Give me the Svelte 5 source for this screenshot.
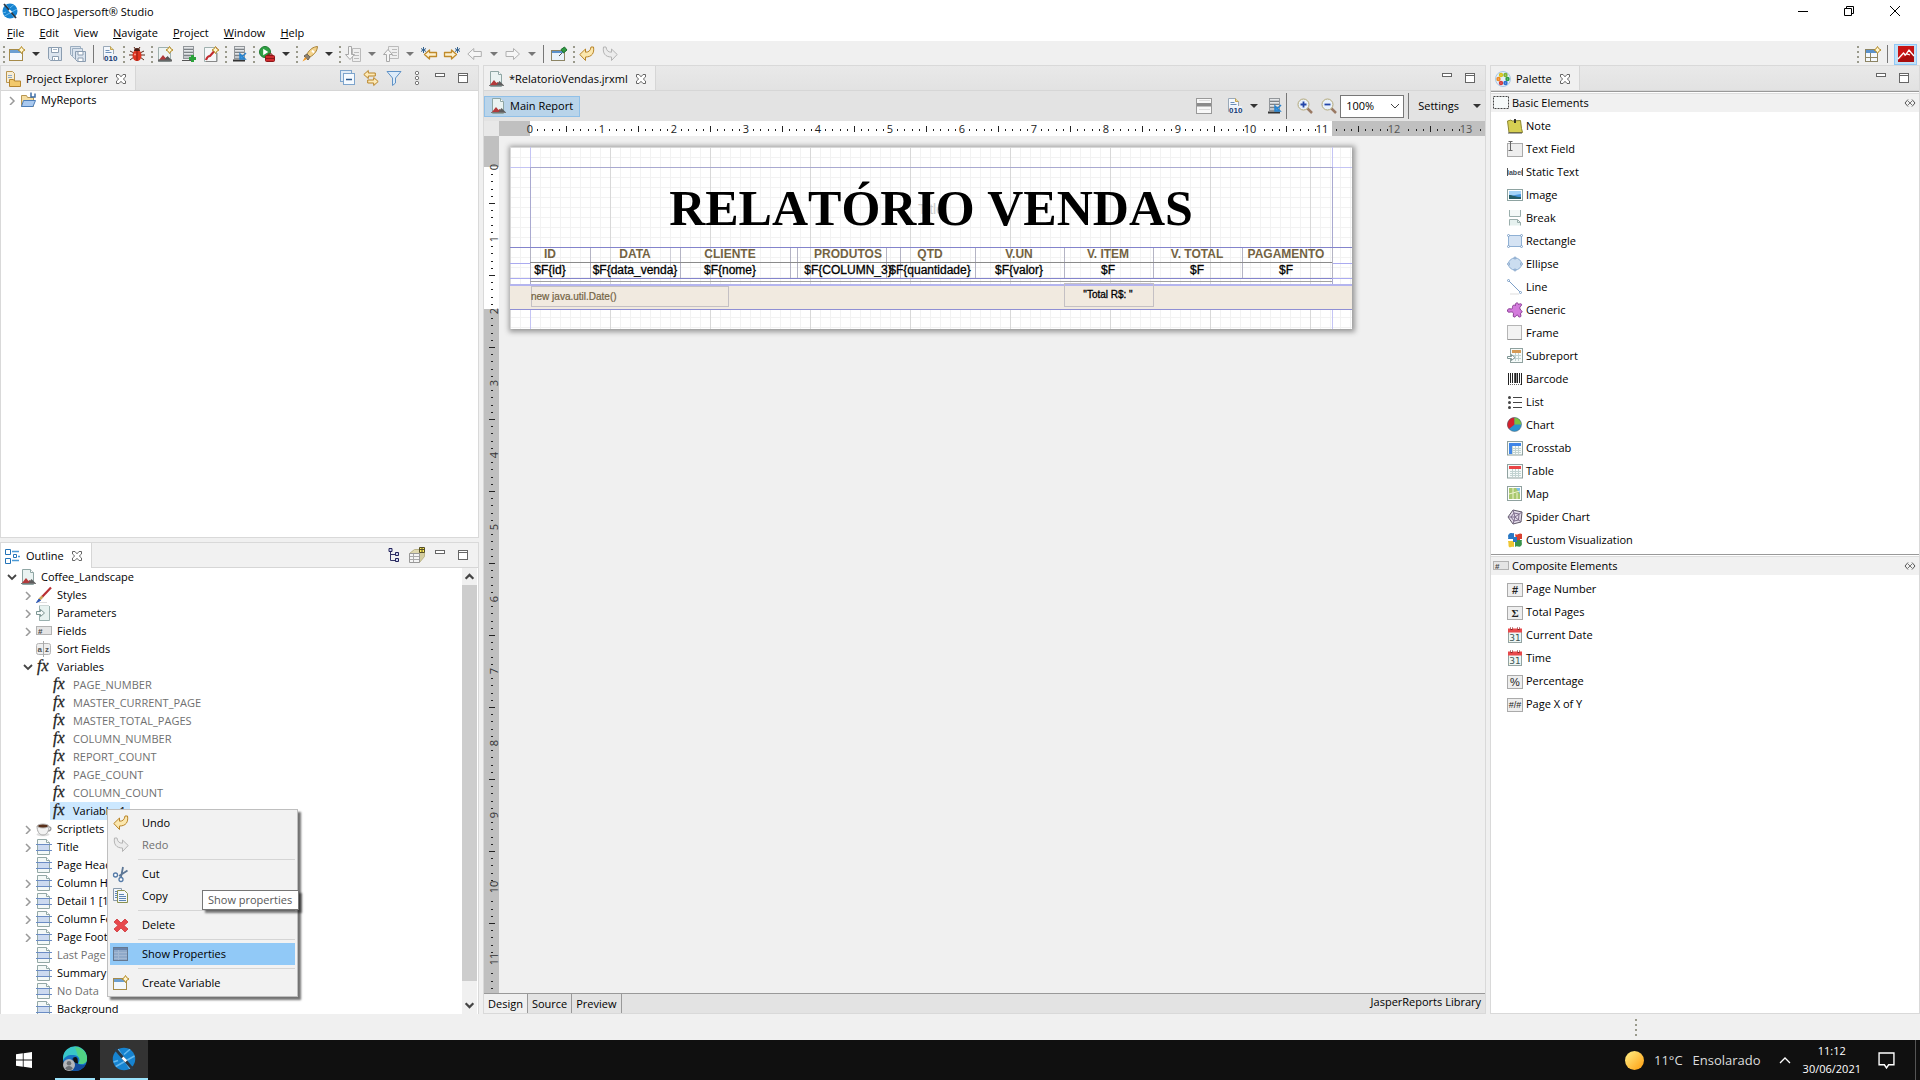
<script>
  const page = '<path d="M2.500 .5h8l3 3v12h-11z" fill="#eaf3f2" stroke="#8fa6a4"/><path d="M10.500 .5v3h3" fill="#fff" stroke="#8fa6a4"/>';
  const spark = '<path d="M12.500 .5l1.300 2.200 2.200 1.300-2.200 1.300-1.300 2.200-1.300-2.200-2.200-1.300 2.200-1.300z" fill="#fff6cf" stroke="#b58a22"/>';
  const mountains = '<path d="M2 14l4-5 2.500 3 1-1 4 3z" fill="#b3393a"/><path d="M8 14.500l3.500-4.500 4.500 4.500z" fill="#5d5d5d"/><path d="M1 14.500h15" stroke="#777"/>';
  const binary = '<path d="M2.500 .5h7l3 3v10h-10z" fill="#f4f8fd" stroke="#9aa9b8"/><path d="M9.500 .5v3h3" fill="#f3d98a" stroke="#c5a550"/><path d="M4.500 4.500h4M4.500 6.500h6" stroke="#6b8fb8"/><rect x="3" y="8" width="13" height="7" fill="#eef3f9"/><text x="3" y="15" font-size="8" font-weight="700" font-family="Liberation Sans, sans-serif" fill="#173a70">010</text>';
  const cell = '<rect x=".5" y="2.500" width="15" height="13" fill="#eee" stroke="#aaa"/>';
  const server = '<rect x="3.500" y=".5" width="10" height="12" fill="#c3c6ca" stroke="#92969a"/><path d="M4 3.500h9M4 6.500h9M4 9.500h9" stroke="#7d8286"/><path d="M4 1.500h9M4 4.500h9M4 7.500h9" stroke="#e4e6e8"/>';
  const gridlines = '<path d="M3 8.500h11M3 10.500h11M3 12.500h11M5.500 6v8M8.500 6v8M11.500 6v8" stroke="#c2d3d1"/>';
  const sheet = '<rect x=".5" y="1.500" width="15" height="13.500" fill="#f6fbfa" stroke="#8fa19f"/>';
  const calendar = '<rect x="1.500" y="4.500" width="13" height="11" fill="#eef6f5" stroke="#93a3a1"/><path d="M1 1.500h14v4H1z" fill="#e8494b"/><path d="M4.500 0v3M11.500 0v3" stroke="#8b2021" stroke-width="2"/><path d="M4.500 0v2M11.500 0v2" stroke="#fff"/><text x="8" y="14" text-anchor="middle" font-size="9" font-family="DejaVu Sans, sans-serif" fill="#3e5654">31</text>';
  const windowNew = '<rect x=".5" y="3.500" width="13" height="11" fill="#f3f8fd" stroke="#a68b4a"/><path d="M1 4h12v3H1z" fill="#6b9fd2"/>' + spark;
  const lens = '<path d="M10 10l5 5" stroke="#9a7a64" stroke-width="2.500"/><circle cx="6.500" cy="6.500" r="5.500" fill="#e9f1fa" stroke="#b3a878"/>';
  const undo = '<path d="M.8 8.500L6.500 3v3.200c3.500 0 5-1.700 5.500-5.200h2.500c1 6-1.500 10-8 10v3.500z" fill="#fbe7ae" stroke="#b98427" stroke-linejoin="round"/>';
  const redo = '<path d="M15.200 8.500L9.500 3v3.200C6 6.200 4.500 4.500 4 1H1.500c-1 6 1.500 10 8 10v3.500z" fill="#ececec" stroke="#b4b4b4" stroke-linejoin="round"/>';
  const downloadSrv = server + '<path d="M2 14.500h12" stroke="#333" stroke-width="2"/><path d="M15 7l-4 4M9 8v5h5z" fill="#3a9be6" stroke="#2a83cc" stroke-width="1.500"/>';
  const fieldBox = '<rect x=".5" y="3.500" width="15" height="8" fill="#e5e5e5" stroke="#b2b2b2"/><text x="2" y="10.500" font-size="8" font-weight="700" font-family="Liberation Sans, sans-serif" fill="#444">#</text>';

  const icons = {
    app: '<circle cx="8" cy="8" r="7.500" fill="#1683d0"/><path d="M4 1.500l8 13M15 6L2.500 13M8 5l4-3.500M4 9L1 10" stroke="#65b9ef" fill="none"/><path d="M2 1l12 14" stroke="#2c3743" stroke-width="1.800"/><path d="M7 7l2.500 2.500" stroke="#fff" stroke-width="1.800"/>',
    newWizard: windowNew,
    save: '<path d="M1.500 1.500h13v13h-11l-2-2z" fill="#dbe4ee" stroke="#8b9db0"/><path d="M4.500 1.500h7v5h-7zM5.500 10.500h6v4h-6z" fill="#fff" stroke="#8b9db0"/><path d="M6 3.500h4M7.500 12v2" stroke="#a8b8c8"/>',
    saveAll: '<path d="M.5 .5h10v10h-8l-2-2z" fill="#dbe4ee" stroke="#9badbf"/><path d="M2.500 2.500h10v10h-8l-2-2z" fill="#dbe4ee" stroke="#9badbf"/><path d="M5.500 5.500h10v10h-8l-2-2z" fill="#dbe4ee" stroke="#8b9db0"/><path d="M8 5.500h5v3.500H8zM8 12h5v3.500H8z" fill="#fff" stroke="#8b9db0"/>',
    binary,
    bug: '<path d="M1 5l4 2M15 5l-4 2M0 9h16M1 14l4-3M15 14l-4-3M5 1l2 3M11 1L9 4" stroke="#5b2a1b"/><ellipse cx="8" cy="9.500" rx="4.500" ry="5.500" fill="#df3420"/><path d="M5 5a3 3 0 0 1 6 0z" fill="#4a1c12"/><path d="M8 5v10" stroke="#8a1d10"/><circle cx="6" cy="8.500" r="1" fill="#f9a08d"/>',
    newReport: '<path d="M1.500 1.500h12v14h-12z" fill="#eef4f3" stroke="#9fb0ae"/><path d="M2 14l4-5 2.500 3 1-1 4 3z" fill="#b3393a"/><path d="M7 14.500l3.500-4.500 4.500 4.500z" fill="#555"/><path d="M1 14.500h14" stroke="#666" stroke-width="2"/>' + spark,
    newData: server + '<path d="M2 14.500h9" stroke="#555"/><path d="M12.500 9v7M9 12.500h7" stroke="#2ca23b" stroke-width="3"/>',
    newStyle: '<path d="M1.500 1.500h12v14h-12z" fill="#f5f7f8" stroke="#9fb0ae"/><path d="M3 14c1-3 2-4 4-4L14 2" fill="none" stroke="#c12b2e" stroke-width="2.200"/><path d="M3 15.500h11V7" fill="none" stroke="#888"/>' + spark,
    publish: downloadSrv,
    run: '<circle cx="6" cy="6" r="5.500" fill="#2ea043" stroke="#1d7b30"/><path d="M4.200 2.800l5 3.200-5 3.200z" fill="#fff"/><rect x="6.500" y="9.500" width="9" height="6" rx="1" fill="#cf2a2d" stroke="#8c1719"/><path d="M9 9.500V8h4v1.500M7 12.500h8" stroke="#8c1719" fill="none"/>',
    rocket: '<path d="M5 8C8 3 11 1 15.500 .5 15 5 13 8 8 11z" fill="#f3d28b" stroke="#a98338"/><path d="M5 8l3 3-2 3-4-4z" fill="#8b8170" stroke="#6e6557"/><path d="M3 11l-2.500 4.500L5 13z" fill="#f49c27"/><path d="M10 4.500l2 2" stroke="#fff" stroke-width="2"/>',
    stepIn: '<path d="M7.500 2.500h8v13h-8z" fill="#efefef" stroke="#bbb"/><path d="M9 6.500h5M9 9.500h5M9 12.500h5" stroke="#bbb"/><path d="M3.500 .5h3v8h3L5 13.500 .5 8.500h3z" fill="#f6f6f6" stroke="#a8a8a8"/>',
    stepOut: '<path d="M5.500 .5h10v12h-10z" fill="#efefef" stroke="#bbb"/><path d="M9 3.500h5M9 6.500h5M9 9.500h5" stroke="#bbb"/><path d="M3.500 15.500h3v-7h3L5 3.500 .5 8.500h3z" fill="#f6f6f6" stroke="#a8a8a8"/>',
    backStar: '<path d="M3.500 8.500l5-4.500v2.500h7v4h-7V13z" fill="#fdf1cf" stroke="#c08a2a" stroke-width="1.300" stroke-linejoin="round"/><path d="M2.500 1v6M0 2.500l5 3M5 2.500l-5 3" stroke="#35638f"/>',
    fwdStar: '<path d="M12.500 8.500l-5-4.500v2.500h-7v4h7V13z" fill="#fdf1cf" stroke="#c08a2a" stroke-width="1.300" stroke-linejoin="round"/><path d="M13.500 1v6M11 2.500l5 3M16 2.500l-5 3" stroke="#35638f"/>',
    back: '<path d="M.8 8l6-5.500v3h7.500v5H6.800v3z" fill="#f6f6f6" stroke="#b0b0b0" stroke-linejoin="round"/>',
    fwd: '<path d="M14.500 8l-6-5.500v3H1v5h7.500v3z" fill="#f6f6f6" stroke="#b0b0b0" stroke-linejoin="round"/>',
    pin: '<rect x=".5" y="4.500" width="13" height="10" fill="#eaf3fb" stroke="#8c8464"/><path d="M1 5h12v2H1z" fill="#5b92cc"/><path d="M8 10l3-3" stroke="#555"/><path d="M10 3.500l3.500-2.500 2.500 3-3.500 3z" fill="#2f9a43" stroke="#1f6e2e"/>',
    undo, redo,
    openPersp: '<rect x=".5" y="3.500" width="12" height="12" fill="#f5f9fc" stroke="#8c8464"/><path d="M1 4h11v3H1z" fill="#5b92cc"/><path d="M5.500 7v8M1 11.500h11" stroke="#8c8464"/>' + spark,
    persp: '<path d="M0 0h16v16H0z" fill="#a80d0d"/><path d="M0 0h16v6L0 14z" fill="#c81414"/><path d="M0 13l5.500-6 2 2L11 4l2 2.500L16 10M6 9l3-1 3 1" fill="none" stroke="#fff" stroke-width="1.300"/>',
    folderDoc: '<path d="M1.500 .5h6l2 2v9h-8z" fill="#f8edd4" stroke="#b99650"/><path d="M3 4.500h4M3 6.500h4" stroke="#8ca9c9"/><path d="M4.500 8.500h4l1 1.500h6v5.500h-11z" fill="#f2c96c" stroke="#b5852e"/>',
    project: '<path d="M1.500 3.500h5l1 2h6v9h-12z" fill="#f5dda0" stroke="#b99650"/><path d="M3.500 8.500h12l-2.500 6H1.500z" fill="#a9c9ef" stroke="#4d7eb8"/><path d="M11 .5v4.500h4V1.500" fill="none" stroke="#3d6ea8" stroke-width="1.500"/>',
    collapseAll: '<rect x=".5" y=".5" width="11" height="11" fill="#dfeaf5" stroke="#7da4cc"/><rect x="3.500" y="3.500" width="11" height="11" fill="#f5faff" stroke="#7da4cc"/><path d="M6 9.500h6" stroke="#2c5b90" stroke-width="1.500"/>',
    link: '<path d="M.8 4.500l4.500-4v2.500h7v3h-7v2.500zM15.200 11.500l-4.500-4V10h-6v3h6v2.500z" fill="#fdeab8" stroke="#b98427" stroke-linejoin="round"/>',
    filter: '<path d="M1 1.500h14l-5.500 6.500v5l-3 2.500V8z" fill="#dcebf9" stroke="#5f92c6" stroke-linejoin="round"/>',
    dots: '<circle cx="8" cy="3" r="1.700" fill="#fff" stroke="#777"/><circle cx="8" cy="8" r="1.700" fill="#fff" stroke="#777"/><circle cx="8" cy="13" r="1.700" fill="#fff" stroke="#777"/>',
    min: '<rect x="3.500" y="3.500" width="9" height="3" fill="#fff" stroke="#666"/>',
    max: '<rect x="3.500" y="3.500" width="9" height="9" fill="#fff" stroke="#666"/><path d="M4 5.500h8" stroke="#666"/>',
    close: '<path d="M3.500 3.500h2.500l2 2.300 2-2.300h2.500V6L10.300 8l2.200 2v2.500H10L8 10.300 6 12.500H3.500V10l2.200-2-2.200-2z" fill="#fff" stroke="#666"/>',
    outline: '<path d="M.5 1.500h5v5h-5zM.5 10.500h5v5h-5z" fill="#fff" stroke="#2474b8"/><path d="M8.500 6.500h3v3h-3z" fill="#fff" stroke="#2474b8"/><path d="M7 3.500h7M13 8.500h2M7 12.500h7" stroke="#4b9ad6" stroke-width="1.500"/>',
    treeView: '<path d="M4.500 2v11.500H11M4.500 7.500H11" fill="none" stroke="#336"/><path d="M3 1.500h3v3H3zM9.500 5.500h3v3h-3zM9.500 11.500h3v3h-3z" fill="#cfd6f0" stroke="#24245c"/>',
    propsView: '<path d="M.5 6.500l5-4h10l-5 4z" fill="#e0d9b0" stroke="#bbb58a"/><path d="M10.500 6.500l5-4v7l-5 6z" fill="#d4cda0" stroke="#bbb58a"/><path d="M.5 6.500h10v9H.5z" fill="#f5f5f5" stroke="#999"/><path d="M1 9.500h9M1 12.500h9M4.500 7v8" stroke="#aaa"/><path d="M10.500 .5h5v5h-5z" fill="#ffec5c" stroke="#554f25"/><path d="M10.500 2.500h5M13 1v4" stroke="#554f25"/>',
    report: page + mountains,
    styles: '<path d="M0 15.500h11" stroke="#ddd"/><path d="M6 10L15 .5" stroke="#b92f33" stroke-width="2.200"/><path d="M3 13l3.500-3.500" stroke="#c9a35c" stroke-width="2.500"/><path d="M.5 15.500L3 12l1.500 1.500z" fill="#2b57b5" stroke="#2b57b5"/>',
    params: '<path d="M3.500 1v14.500h10V1" fill="#e7f2f0" stroke="#9ab0ae"/><path d="M3.500 .5h10M3.500 15.500h10" stroke="#9ab0ae" stroke-dasharray="1 1"/><path d="M.5 6.500h4v-2l4 3.500-4 3.500v-2h-4z" fill="#f4faf9" stroke="#7c9492"/>',
    fields: fieldBox,
    sort: '<rect x=".5" y="2.500" width="14" height="11" rx="2" fill="#eee" stroke="#b5b5b5"/><path d="M7.500 0v16" stroke="#aaa"/><text x="1.500" y="11" font-size="8" font-weight="700" font-family="Liberation Sans, sans-serif" fill="#555">a</text><text x="9" y="11" font-size="8" font-weight="700" font-family="Liberation Sans, sans-serif" fill="#555">z</text>',
    fx: '<text x="1" y="12" font-size="16" font-style="italic" font-family="Liberation Serif, serif" fill="#222" stroke="#222" stroke-width=".3">fx</text>',
    cup: '<ellipse cx="7" cy="13.500" rx="6.500" ry="1.800" fill="#ddd"/><path d="M12 6c4-1 4 4-.5 4" fill="none" stroke="#999" stroke-width="1.200"/><path d="M1 5h12c0 5-2 9-6 9S1 10 1 5z" fill="#f2f2f2" stroke="#aaa"/><ellipse cx="7" cy="5" rx="5.500" ry="2" fill="#59301a" stroke="#bbb"/>',
    band: '<path d="M1.500 .5h9l3 3v12h-12z" fill="#f3f8f7" stroke="#93a8a6"/><path d="M10.500 .5v3h3" fill="#fff" stroke="#93a8a6"/><path d="M2 6h11v5H2z" fill="#ccdaf0"/><path d="M0 5.500h16M0 11.500h16" stroke="#6b8cc4"/>',
    cut: '<path d="M6 10L14.500 4.500M8 11l2-10" stroke="#5d7796" stroke-width="1.800"/><circle cx="2.500" cy="9" r="2" fill="#fff" stroke="#557ba8" stroke-width="1.300"/><circle cx="8" cy="13.500" r="2" fill="#fff" stroke="#557ba8" stroke-width="1.300"/>',
    copy: '<path d="M.5 .5h8v12h-8z" fill="#f3f7fb" stroke="#8a9bad"/><path d="M4.500 2.500h7l3 3v9h-10z" fill="#f3f7fb" stroke="#8a9150"/><path d="M6 6.500h5M6 8.500h7M6 10.500h7M6 12.500h7M2 3.500h2M2 5.500h2M2 7.500h2M2 9.500h2" stroke="#5b84b5"/>',
    del: '<path d="M4 2l4 4 4-4 3 3-4 3.500 4 3.500-3 3-4-4-4 4-3-3 4-3.500L1 5z" fill="#e8484c" stroke="#d4494d" stroke-linejoin="round"/>',
    props: '<rect x=".5" y="1.500" width="14" height="13" fill="#8fa9c9" stroke="#66788f"/><path d="M1 2h13v2H1z" fill="#6883ab"/><path d="M1 6.500h13M1 9.500h13M1 12.500h13M5.500 4v10" stroke="#a3b8d2"/>',
    bands: '<rect x=".5" y=".5" width="15" height="15" fill="#f8f8f8" stroke="#999"/><path d="M1 5h14v3.500H1z" fill="#8b8b8b"/><path d="M3 2.500h11M3 11.500h11" stroke="#ddd"/>',
    zoomIn: lens + '<path d="M3.500 6.500h6M6.500 3.500v6" stroke="#2346a8" stroke-width="1.800"/>',
    zoomOut: lens + '<path d="M3.500 6.500h6" stroke="#2346a8" stroke-width="1.800"/>',
    palette: '<circle cx="8" cy="8" r="7.500" fill="#e3effa" stroke="#a9c8e6"/><g fill="#fff" stroke-width="1.800"><circle cx="6" cy="4" r="1.300" stroke="#d6c31c"/><circle cx="10.500" cy="4" r="1.300" stroke="#7cb332"/><circle cx="3.500" cy="8" r="1.300" stroke="#f08a24"/><circle cx="12.500" cy="8" r="1.300" stroke="#2e9e44"/><circle cx="6" cy="12" r="1.300" stroke="#d23b3b"/><circle cx="10.500" cy="12" r="1.300" stroke="#2d6fd0"/></g>',
    marquee: '<rect x=".5" y="1.500" width="15" height="12" fill="#f6f9f9" stroke="#444" stroke-dasharray="2 1"/>',
    compHead: fieldBox,
    note: '<path d="M.5 3L4 2l1 1 8.500-.5 1 8 1 4L2 14.500z" fill="#d6cf52" stroke="#8d8730"/><path d="M8 1v4" stroke="#222" stroke-width="1.800"/><path d="M1 15l14 0" stroke="#555"/>',
    textField: cell + '<path d="M1.500 .5h4M3.500 1v8M1.500 9.500h4" stroke="#666"/>',
    label: '<path d="M.5 4v8M15.500 4v8" stroke="#555"/><text x="8" y="11" text-anchor="middle" font-size="7" font-weight="700" font-family="Liberation Sans, sans-serif" fill="#444c58">label</text>',
    image: '<rect x=".5" y="2.500" width="15" height="11" fill="#fff" stroke="#8ea3a1"/><path d="M2 4h12v8H2z" fill="#4a97de"/><path d="M2 4h12v3L2 9z" fill="#a5d3f7"/><path d="M2 8c4 0 6 2 12 2v2H2z" fill="#255c66"/>',
    break: '<path d="M2.500 0v6.500h11V0" fill="#f3f8f7" stroke="#9aaeac"/><path d="M2.500 15.500v-6h8l3 3v3" fill="#e6f1ef" stroke="#9aaeac"/><path d="M10.500 9.500v3h3" fill="none" stroke="#9aaeac"/>',
    rect: '<rect x="1.500" y="2.500" width="13" height="11" fill="#d5e3f3" stroke="#8fb0d4"/><g fill="#fff" stroke="#7c9fc8"><circle cx="1.500" cy="2.500" r="1"/><circle cx="14.500" cy="2.500" r="1"/><circle cx="1.500" cy="13.500" r="1"/><circle cx="14.500" cy="13.500" r="1"/></g>',
    ellipse: '<ellipse cx="8" cy="8" rx="6.500" ry="6" fill="#cbddf0" stroke="#8fb0d4"/><g fill="#fff" stroke="#7c9fc8"><circle cx="8" cy="2" r="1"/><circle cx="8" cy="14" r="1"/><circle cx="1.500" cy="8" r="1"/><circle cx="14.500" cy="8" r="1"/></g>',
    line: '<path d="M2 2l11 11" stroke="#7c9fc8"/><path d="M3 15h9" stroke="#ddd"/><g fill="#fff" stroke="#7c9fc8"><circle cx="1.500" cy="1.500" r="1"/><circle cx="13.500" cy="13.500" r="1"/></g>',
    generic: '<path d="M8.500 3.500c-1-3 3-3.500 3-1 1.500-1 3.500-1 3 .5s-2.500 2-1.500 4 2.500 1.500 2 3-2 .5-1.500 2 1 3-1 3-1-2.500-2.500-2-1 2.500-3 2 .5-3-1-4.500-5 1-5.500-1.500S3 6.500 4 7s1.500-1 1.500-2.500 2-1.500 3-1z" fill="#d37bdc" stroke="#8a3c94"/>',
    frame: '<rect x=".5" y=".5" width="14" height="14" fill="#f3f3f3" stroke="#b5b5b5"/><path d="M1 14.500h14" stroke="#999"/>',
    subreport: '<rect x="3.500" y=".5" width="12" height="14" fill="#f6fbfa" stroke="#8fa19f"/><path d="M5 2h9v3H5z" fill="#d59a55"/><path d="M5 7.500h9M5 10.500h9M8.500 5v8M11.500 5v8" stroke="#c2d3d1"/><path d="M.5 8.500h4v-2l3.500 3-3.500 3v-2h-4z" fill="#fff" stroke="#7c9492"/>',
    barcode: '<path d="M1.500 2v12M3.500 2v10M5.500 2v10M8 2v10M10.500 2v10M12.500 2v10M14.500 2v12" stroke="#222"/><path d="M8.500 2v10" stroke="#222" stroke-width="2"/><path d="M3 13.500h11" stroke="#666" stroke-dasharray="1 1"/>',
    list: '<path d="M6 3.500h9M6 8.500h9M6 13.500h9" stroke="#444"/><g fill="#444"><circle cx="2.500" cy="3.500" r="1.500"/><circle cx="2.500" cy="8.500" r="1.500"/><circle cx="2.500" cy="13.500" r="1.500"/></g>',
    chart: '<circle cx="7.500" cy="7.500" r="7" fill="#2c93cf"/><path d="M7.500 7.500V.5a7 7 0 0 0-5.500 11.500z" fill="#d8202c"/><path d="M7.500 7.500V.5a7 7 0 0 1 6.800 7z" fill="#7cc242"/><circle cx="7.500" cy="7.500" r="7" fill="none" stroke="#54606a" stroke-opacity=".5"/>',
    crosstab: sheet + gridlines + '<path d="M2 3h12v3H2zM2 6h3v8H2z" fill="#3f86e8"/>',
    table: sheet + gridlines + '<path d="M2 3h12v3H2z" fill="#ea4446"/>',
    map: '<rect x=".5" y=".5" width="14" height="14" fill="#fff" stroke="#8fa19f"/><path d="M2 2h11v11H2z" fill="#a9c86e"/><path d="M9 2h4v6z" fill="#7cc0ee"/><path d="M2 8l11-3M6 2v11M10 7v6" stroke="#eef3cf"/>',
    spider: '<path d="M6 1l9 2-1 10-8 2L1 8z" fill="#e3dbe9" stroke="#5f5968"/><path d="M7 4l5 1-.5 6-4.500 1-3-4zM6 1l2 7 7-5M8 8l6 5M8 8l-2 7M8 8H1" fill="none" stroke="#7d6d8c"/>',
    custom: '<path d="M2 2c2-2 3 0 5-1v6H1c1-2-1-3 1-5z" fill="#2877c4"/><path d="M8 2c3 2 4-2 7 0v5H9z" fill="#d94130"/><path d="M1 9h6v6c-2-1-4 1-5 0s0-3-1-6z" fill="#eec632"/><path d="M8 8h7c-1 2 1 4-1 6s-4-1-6 1z" fill="#38924a"/><path d="M6 5h4v5H6z" fill="#2877c4"/><path d="M10 5h3v3h-3z" fill="#d94130"/>',
    pageNumber: cell + '<text x="8" y="13" text-anchor="middle" font-size="11" font-weight="700" font-family="Liberation Sans, sans-serif" fill="#222">#</text>',
    total: cell + '<text x="8" y="13" text-anchor="middle" font-size="11" font-weight="700" font-family="Liberation Serif, serif" fill="#222">Σ</text>',
    calendar,
    percent: cell + '<text x="8" y="13" text-anchor="middle" font-size="11" font-family="Liberation Sans, sans-serif" fill="#222">%</text>',
    pageXY: cell + '<text x="8" y="12" text-anchor="middle" font-size="9" font-family="Liberation Sans, sans-serif" fill="#222">#/#</text>',
    collapse: '<path d="M6 4.500L3 8l3 3.500M10 4.500L13 8l-3 3.500" fill="none" stroke="#555"/><path d="M6 6l4 4M10 6l-4 4" stroke="#777"/>',
    windows: '<path d="M0 2.300l6.800-1v6.300H0zM7.600 1.200L16 0v7.600H7.600zM0 8.400h6.800v6.300l-6.800-1zM7.600 8.400H16V16l-8.400-1.200z" fill="#fff"/>',
    edge: '<circle cx="8" cy="8" r="8" fill="#1773c4"/><path d="M0 7a8 8 0 0 1 16 1c0 3-3 4-6 3 2-2 1-5-2-5.500S2 5 0 9z" fill="#38c6c8"/><path d="M8 0a8 8 0 0 1 8 8c0 3-3 4-6 3 2-2 1-4 0-5z" fill="#59d66e" fill-opacity=".75"/><path d="M10 11c2 1.500 4 1.500 5.500 0A8 8 0 0 1 7 15.800C4 14 4 8.500 7 7c-1 2 1 4 3 4z" fill="#124a9c"/><path d="M7 7c1.500-1 3 0 2.800 2L10 11C8 11 6 9 7 7z" fill="#101010"/><circle cx="4" cy="12" r="4" fill="#b4b6ba"/><circle cx="4" cy="10.800" r="1.500" fill="#6b6e73"/><path d="M1.500 14.500c.5-2.500 4.500-2.500 5 0a4 4 0 0 1-5 0z" fill="#6b6e73"/>'
  };

  const menus = ['File', 'Edit', 'View', 'Navigate', 'Project', 'Window', 'Help'];

  const tools = [
    'grip', 'newWizard', 'caret', 'save', 'saveAll', 'sep', 'binary',
    'grip', 'bug', 'grip', 'newReport', 'newData', 'newStyle',
    'grip', 'publish', 'grip', 'run', 'caret', 'grip', 'rocket', 'caret',
    'grip', 'stepIn', 'caretDim', 'stepOut', 'caretDim', 'backStar', 'fwdStar',
    'back', 'caretDim', 'fwd', 'caretDim', 'sep', 'pin', 'grip', 'undo', 'redo'
  ];

  const tree = [
    { l: 0, a: 'open', i: 'report', t: 'Coffee_Landscape' },
    { l: 1, a: 'shut', i: 'styles', t: 'Styles' },
    { l: 1, a: 'shut', i: 'params', t: 'Parameters' },
    { l: 1, a: 'shut', i: 'fields', t: 'Fields' },
    { l: 1, i: 'sort', t: 'Sort Fields' },
    { l: 1, a: 'open', i: 'fx', t: 'Variables' },
    { l: 2, i: 'fx', t: 'PAGE_NUMBER', dim: true },
    { l: 2, i: 'fx', t: 'MASTER_CURRENT_PAGE', dim: true },
    { l: 2, i: 'fx', t: 'MASTER_TOTAL_PAGES', dim: true },
    { l: 2, i: 'fx', t: 'COLUMN_NUMBER', dim: true },
    { l: 2, i: 'fx', t: 'REPORT_COUNT', dim: true },
    { l: 2, i: 'fx', t: 'PAGE_COUNT', dim: true },
    { l: 2, i: 'fx', t: 'COLUMN_COUNT', dim: true },
    { l: 2, i: 'fx', t: 'Variable_1', sel: true },
    { l: 1, a: 'shut', i: 'cup', t: 'Scriptlets' },
    { l: 1, a: 'shut', i: 'band', t: 'Title' },
    { l: 1, i: 'band', t: 'Page Header' },
    { l: 1, a: 'shut', i: 'band', t: 'Column Header' },
    { l: 1, a: 'shut', i: 'band', t: 'Detail 1 [15px]' },
    { l: 1, a: 'shut', i: 'band', t: 'Column Footer' },
    { l: 1, a: 'shut', i: 'band', t: 'Page Footer' },
    { l: 1, i: 'band', t: 'Last Page Footer', dim: true },
    { l: 1, i: 'band', t: 'Summary' },
    { l: 1, i: 'band', t: 'No Data', dim: true },
    { l: 1, i: 'band', t: 'Background' }
  ];

  const context = [
    ['undo', 'Undo'], ['redo', 'Redo', 'dim'], null,
    ['cut', 'Cut'], ['copy', 'Copy'], null,
    ['del', 'Delete'], null,
    ['props', 'Show Properties', 'hot'], null,
    ['newWizard', 'Create Variable']
  ];

  const groups = [
    { i: 'marquee', t: 'Basic Elements', items: [
      ['note', 'Note'], ['textField', 'Text Field'], ['label', 'Static Text'], ['image', 'Image'],
      ['break', 'Break'], ['rect', 'Rectangle'], ['ellipse', 'Ellipse'], ['line', 'Line'],
      ['generic', 'Generic'], ['frame', 'Frame'], ['subreport', 'Subreport'], ['barcode', 'Barcode'],
      ['list', 'List'], ['chart', 'Chart'], ['crosstab', 'Crosstab'], ['table', 'Table'],
      ['map', 'Map'], ['spider', 'Spider Chart'], ['custom', 'Custom Visualization'] ] },
    { i: 'compHead', t: 'Composite Elements', items: [
      ['pageNumber', 'Page Number'], ['total', 'Total Pages'], ['calendar', 'Current Date'],
      ['calendar', 'Time'], ['percent', 'Percentage'], ['pageXY', 'Page X of Y'] ] }
  ];

  // One inch is 72 units, split into ten marks; the rulers hold as many inches as their length allows.
  let across = $state(986);
  let down = $state(857);
  const inches = (length) => Array.from({ length: Math.max(0, Math.ceil((length - 40) / 72)) }, (_, n) => n);
  const marks = (length) => inches(length + 72).flatMap((n) =>
    [1, 2, 3, 4, 5, 6, 7, 8, 9]
      .filter((k) => n < 10 || k > 1)
      .map((k) => ({ at: 31 + n * 72 + Math.round(k * 7.2), tall: k === 5 })));

  const cells = [20, 80, 170, 280, 287, 376, 390, 465, 554, 643, 732, 822];
  const heads = [[40, 'ID'], [125, 'DATA'], [220, 'CLIENTE'], [338, 'PRODUTOS'], [420, 'QTD'], [509, 'V.UN'], [598, 'V. ITEM'], [687, 'V. TOTAL'], [776, 'PAGAMENTO']];
  const details = [[40, '$F{id}'], [125, '$F{data_venda}'], [220, '$F{nome}'], [338, '$F{COLUMN_3}'], [420, '$F{quantidade}'], [509, '$F{valor}'], [598, '$F'], [687, '$F'], [776, '$F']];
</script>

{#snippet icon(name)}
  <svg class="icon" viewBox="0 0 16 16" aria-hidden="true">{@html icons[name]}</svg>
{/snippet}

{#snippet caret(dim)}
  <svg class="caret" class:dim viewBox="0 0 8 4" aria-hidden="true"><path d="M0 0h8L4 4z" /></svg>
{/snippet}

{#snippet arrow(state)}
  <svg class="arrow" viewBox="0 0 10 10" aria-hidden="true">
    {#if state === 'open'}<path d="M1 3l4 4 4-4" stroke="#444" stroke-width="1.8" />{:else if state === 'shut'}<path d="M3 2l4 4-4 4" stroke="#999" stroke-width="1.5" />{/if}
  </svg>
{/snippet}

{#snippet viewTab(iconName, label)}
  <div class="tab" role="tab" aria-selected="true">
    {@render icon(iconName)}<span>{label}</span>
    <button class="tool" aria-label="Close {label}">{@render icon('close')}</button>
  </div>
{/snippet}

{#snippet winButtons()}
  <button class="tool" aria-label="Minimize">{@render icon('min')}</button>
  <button class="tool" aria-label="Maximize">{@render icon('max')}</button>
{/snippet}

<div class="desktop">
  <header class="title">
    {@render icon('app')}<span>TIBCO Jaspersoft® Studio</span>
    <div class="window-buttons">
      <button aria-label="Minimize window"><svg viewBox="0 0 10 10"><path d="M0 5.500h10" /></svg></button>
      <button aria-label="Restore window"><svg viewBox="0 0 10 10"><path d="M.5 2.500h7v7h-7zM2.500 2.500v-2h7v7h-2" /></svg></button>
      <button aria-label="Close window"><svg viewBox="0 0 10 10"><path d="M0 0l10 10M10 0L0 10" /></svg></button>
    </div>
  </header>

  <nav class="menubar">
    {#each menus as m}<button>{#if m === 'View'}{m}{:else}<u>{m[0]}</u>{m.slice(1)}{/if}</button>{/each}
  </nav>

  <div class="toolbar" role="toolbar">
    {#each tools as t}
      {#if t === 'grip'}<span class="grip"></span>
      {:else if t === 'sep'}<span class="sep"></span>
      {:else if t === 'caret' || t === 'caretDim'}<button class="tool" aria-label="More">{@render caret(t === 'caretDim')}</button>
      {:else}<button class="tool" aria-label={t}>{@render icon(t)}</button>{/if}
    {/each}
    <div class="perspectives">
      <span class="grip"></span>
      <button class="tool" aria-label="Open perspective">{@render icon('openPersp')}</button>
      <span class="sep"></span>
      <button class="tool active" aria-label="Report design">{@render icon('persp')}</button>
    </div>
  </div>

  <main>
    <div class="left">
      <section class="panel">
        <div class="head">
          {@render viewTab('folderDoc', 'Project Explorer')}
          <div class="actions">
            {#each ['collapseAll', 'link', 'filter', 'dots'] as a}<button class="tool" aria-label={a}>{@render icon(a)}</button>{/each}
            {@render winButtons()}
          </div>
        </div>
        <div class="node l0">{@render arrow('shut')}<span class="entry">{@render icon('project')}MyReports</span></div>
      </section>

      <section class="panel outline">
        <div class="head focus">
          {@render viewTab('outline', 'Outline')}
          <div class="actions">
            {#each ['treeView', 'propsView'] as a}<button class="tool" aria-label={a}>{@render icon(a)}</button>{/each}
            {@render winButtons()}
          </div>
        </div>
        <div class="tree-area">
          <div class="tree" role="tree">
            {#each tree as n}
              <div class="node l{n.l}" class:dim={n.dim} role="treeitem" aria-selected={!!n.sel}>
                {@render arrow(n.a)}<span class="entry" class:selected={n.sel}>{@render icon(n.i)}{n.t}</span>
              </div>
            {/each}
          </div>
          <div class="scroll">
            <svg viewBox="0 0 10 10"><path d="M1.500 7L5 3.500 8.500 7" /></svg>
            <span class="thumb"></span>
            <svg viewBox="0 0 10 10"><path d="M1.500 3L5 6.500 8.500 3" /></svg>
          </div>
        </div>
        <div class="context" role="menu">
          {#each context as c}
            {#if c}<button class={c[2]} role="menuitem">{@render icon(c[0])}{c[1]}</button>{:else}<hr />{/if}
          {/each}
        </div>
        <div class="tip" role="tooltip">Show properties</div>
      </section>
    </div>

    <section class="panel editor">
      <div class="head">
        {@render viewTab('report', '*RelatorioVendas.jrxml')}
        <div class="actions">{@render winButtons()}</div>
      </div>
      <div class="editor-bar">
        <button class="crumb">{@render icon('report')}Main Report</button>
        <div class="editor-tools">
          <button class="tool" aria-label="Bands">{@render icon('bands')}</button>
          <div class="cluster">
            <button class="tool" aria-label="Compile">{@render icon('binary')}</button>
            <button class="tool" aria-label="More">{@render caret(false)}</button>
            <button class="tool" aria-label="Publish">{@render icon('publish')}</button>
          </div>
          <span class="sep"></span>
          <div class="cluster">
            <button class="tool" aria-label="Zoom in">{@render icon('zoomIn')}</button>
            <button class="tool" aria-label="Zoom out">{@render icon('zoomOut')}</button>
          </div>
          <div class="zoom">
            <select aria-label="Zoom"><option>100%</option></select>
            <svg viewBox="0 0 10 10"><path d="M1 3l4 4 4-4" /></svg>
          </div>
          <span class="sep"></span>
          <button class="settings">Settings{@render caret(false)}</button>
        </div>
      </div>
      <div class="workspace">
        <span class="corner"></span>
        <div class="track" bind:clientWidth={across}>
          <svg class="ruler">
            <rect width="100%" height="15" fill="#c0c0c0" /><rect x="31" width="802" height="15" fill="#fff" />
            {#each marks(across) as m}<rect x={m.at} y={m.tall ? 5 : 8} width="1" height={m.tall ? 6 : 2} fill="#222" />{/each}
            {#each inches(across) as n}<text x={31 + n * 72} y="12" fill={n > 11 ? '#555' : '#222'}>{n}</text>{/each}
          </svg>
        </div>
        <div class="track" bind:clientHeight={down}>
          <svg class="ruler">
            <rect width="15" height="100%" fill="#c0c0c0" /><rect y="31" width="15" height="142" fill="#fff" />
            {#each marks(down) as m}<rect x={m.tall ? 5 : 7} y={m.at} width={m.tall ? 6 : 2} height="1" fill="#222" />{/each}
            {#each inches(down) as n}<text transform="translate(14 {31 + n * 72}) rotate(-90)" fill="#333">{n}</text>{/each}
          </svg>
        </div>
        <div class="canvas">
          <svg class="page" width="842" height="182" viewBox="0 0 842 182">
            <defs>
              <pattern id="minor" width="10" height="10" patternUnits="userSpaceOnUse"><path d="M.5 0v10M0 .5h10" stroke="#f2f2f2" /></pattern>
              <pattern id="major" width="100" height="100" patternUnits="userSpaceOnUse"><path d="M.5 0v100M0 .5h100" stroke="#d8d8d8" /></pattern>
            </defs>
            <rect width="842" height="182" fill="#fff" />
            <rect width="842" height="182" fill="url(#minor)" /><rect width="842" height="182" fill="url(#major)" />
            <g fill="none" shape-rendering="crispEdges">
              <path d="M0 20.500h842M20.500 0v182M822.500 0v182" stroke="#c4c4f4" />
              <path d="M20 20.500h802M20.500 20v117M822.500 20v117" stroke="#a9a9d0" />
              <path d="M0 138h842v24H0z" fill="#f1eae0" />
              <path d="M0 116.500h20M822 116.500h20M0 131.500h20M822 131.500h20" stroke="#aaaaf0" />
              {#each cells as x}<path d="M{x + .5} 100v31" stroke="#b4b4c4" />{/each}
              <path d="M160.500 100v31" stroke="#d0d0d8" />
              <path d="M20 115.500h802" stroke="#8b8b8b" />
              <path d="M0 100.500h842M20 131.500h802" stroke="#8484cc" />
              <path d="M20 134.500h802" stroke="#a2a2a2" />
              <path d="M0 137.500h842" stroke="#b4b4ee" stroke-width="2" />
              <path d="M0 162.500h842" stroke="#8f8fd4" />
              <path d="M21.500 139.500h197v20h-197zM554.500 136.500h89v23h-89z" stroke="#c4c0c4" />
            </g>
            <text class="ghost" x="421" y="67">Title</text>
            <text class="report-title" x="421" y="78">RELATÓRIO VENDAS</text>
            {#each heads as [x, t]}<text class="col" {x} y="111">{t}</text>{/each}
            {#each details as [x, t]}<text class="field" {x} y="127">{t}</text>{/each}
            <text class="date" x="21" y="153">new java.util.Date()</text>
            <text class="sum" x="598" y="151">"Total R$: "</text>
          </svg>
        </div>
      </div>
      <div class="bottom-tabs" role="tablist">
        <button class="on" role="tab" aria-selected="true">Design</button><button role="tab" aria-selected="false">Source</button><button role="tab" aria-selected="false">Preview</button>
        <span>JasperReports Library</span>
      </div>
    </section>

    <section class="panel palette">
      <div class="head">
        {@render viewTab('palette', 'Palette')}
        <div class="actions">{@render winButtons()}</div>
      </div>
      {#each groups as g}
        <div class="group">
          <h2>{@render icon(g.i)}<span>{g.t}</span><button class="tool" aria-label="Pin {g.t}">{@render icon('collapse')}</button></h2>
          <ul>
            {#each g.items as [i, t]}<li><button>{@render icon(i)}{t}</button></li>{/each}
          </ul>
        </div>
      {/each}
    </section>
  </main>

  <div class="status"><span class="grip"></span></div>

  <footer class="taskbar">
    <button class="start" aria-label="Start">{@render icon('windows')}</button>
    <button class="task" aria-label="Edge">{@render icon('edge')}</button>
    <button class="task current" aria-label="Jaspersoft Studio">{@render icon('app')}</button>
    <div class="tray">
      <button class="weather"><span class="sun"></span><span>11°C</span><span>Ensolarado</span></button>
      <button class="up" aria-label="Hidden icons"><svg viewBox="0 0 12 12"><path d="M1 9l5-5 5 5" /></svg></button>
      <div class="clock"><span>11:12</span><span>30/06/2021</span></div>
      <button class="notify" aria-label="Notifications"><svg viewBox="0 0 16 16"><path d="M1 1h14v11h-5l-2 3-2-3H1z" /></svg></button>
    </div>
  </footer>
</div>

<style>
  :global(body) { margin: 0; }
  .desktop {
    display: flex;
    flex-direction: column;
    height: 100vh;
    overflow: hidden;
    background: #f0f0f0;
    color: #000;
    font: 11px/18px "Open Sans", "Noto Sans", sans-serif;
    white-space: nowrap;
  }
  .desktop * { box-sizing: border-box; }
  button, select {
    margin: 0;
    padding: 0;
    border: 0;
    background: none;
    color: inherit;
    font: inherit;
  }
  button { display: flex; align-items: center; }
  .icon { display: block; flex: none; width: 16px; height: 16px; overflow: visible; }
  .caret { display: block; width: 8px; height: 4px; fill: #333; }
  .caret.dim { fill: #777; }
  .arrow { flex: none; width: 10px; height: 10px; fill: none; }

  .title { display: flex; align-items: center; gap: 5px; height: 22px; padding-left: 2px; background: #fff; }
  .title span { padding-top: 2px; }
  .window-buttons { display: flex; gap: 36px; margin-left: auto; padding-right: 20px; }
  .window-buttons svg { width: 10px; height: 10px; fill: none; stroke: #000; }
  .menubar { display: flex; gap: 15px; height: 19px; padding-left: 7px; background: #fff; }
  .menubar button { display: block; height: 22px; }

  .toolbar { display: flex; align-items: center; gap: 7px; height: 24px; padding: 2px 0 0 4px; }
  .grip {
    width: 2px;
    height: 17px;
    margin: 0 -3px 0 -1px;
    background: repeating-linear-gradient(#9a9a8c 0 2px, transparent 2px 5px);
  }
  .sep { width: 1px; height: 18px; background: #777; }
  .perspectives { display: flex; align-items: center; gap: 6px; margin-left: auto; padding-right: 3px; }
  .perspectives .grip { margin: 0; }
  .active { justify-content: center; width: 23px; height: 21px; border: 1px solid #90c8f6; background: #c3e0f5; }

  main {
    display: grid;
    flex: 1;
    grid-template-columns: minmax(0, 479fr) minmax(0, 1003fr) minmax(0, 430fr);
    gap: 4px;
    min-height: 0;
  }
  .left { display: grid; grid-template-rows: minmax(0, 473fr) minmax(0, 472fr); gap: 4px; min-height: 0; }
  .panel {
    display: flex;
    flex-direction: column;
    min-width: 0;
    min-height: 0;
    border: 1px solid #d9d9d9;
    background: #fff;
  }
  .head {
    display: flex;
    flex: none;
    height: 25px;
    border-bottom: 1px solid #d6d6d6;
    background: linear-gradient(#e9e9e9, #e2e2e2);
  }
  .tab { display: flex; align-items: center; gap: 5px; padding: 1px 6px 0 4px; border-right: 1px solid #d6d6d6; background: #f0f0f0; }
  .head.focus { background: #f1f1f1; }
  .focus .tab { margin-bottom: -1px; background: #fff; }
  .actions { display: flex; align-items: center; gap: 7px; margin-left: auto; padding-right: 7px; }

  .node { display: flex; align-items: center; gap: 3px; height: 18px; padding-left: 6px; }
  .node.l1 { padding-left: 22px; }
  .node.l2 { padding-left: 36px; }
  .entry { display: flex; align-items: center; gap: 5px; height: 18px; padding-right: 4px; }
  .l2 .entry { padding-left: 2px; }
  .dim { color: #707070; }
  .selected { background: #cce8ff; }
  .outline { position: relative; border-bottom: 0; }
  .tree-area { display: flex; flex: 1; min-height: 0; }
  .tree { flex: 1; min-width: 0; overflow: hidden; }
  .scroll { display: flex; flex-direction: column; width: 15px; margin-right: 1px; background: #f0f0f0; }
  .scroll svg { width: 11px; height: 17px; margin: 0 2px; fill: none; stroke: #444; stroke-width: 2; }
  .thumb { flex: none; height: 396px; margin-bottom: auto; background: #cdcdcd; }

  .context {
    position: absolute;
    top: 266px;
    left: 106px;
    width: 191px;
    padding: 2px;
    border: 1px solid #bfbfbf;
    background: #f2f2f2;
    box-shadow: 3px 3px 2px rgb(0 0 0 / 55%);
  }
  .context button { gap: 13px; width: 100%; height: 22px; padding-left: 3px; }
  .context .hot { background: #91c9f7; }
  .context hr { height: 1px; margin: 3px 0 3px 28px; border: 0; background: #d5d5d5; }
  .tip {
    position: absolute;
    top: 347px;
    left: 201px;
    padding: 0 6px 0 5px;
    border: 1px solid #767676;
    background: #fff;
    box-shadow: 3px 3px 2px rgb(0 0 0 / 50%);
    color: #575757;
  }

  .editor { background: #f0f0f0; }
  .editor-bar { display: flex; flex: none; align-items: center; height: 30px; background: #e3e3e3; }
  .crumb { gap: 4px; height: 21px; padding: 0 6px 0 5px; border: 1px solid #90c0e8; background: #b9d4ea; }
  .editor-tools { display: flex; align-items: center; gap: 3px; margin-left: auto; padding-right: 4px; }
  .cluster { display: flex; align-items: center; gap: 8px; padding-left: 6px; }
  .tool + .cluster { padding-left: 11px; }
  .editor-tools .sep { height: 26px; margin: 0 1px; }
  .zoom { display: grid; align-items: center; width: 64px; height: 23px; border: 1px solid #777; background: #fff; }
  .zoom > * { grid-area: 1 / 1; }
  .zoom select { height: 21px; padding-left: 5px; appearance: none; }
  .zoom svg { justify-self: end; width: 10px; height: 10px; margin-right: 3px; fill: none; stroke: #444; pointer-events: none; }
  .settings { gap: 14px; padding-left: 5px; }

  .workspace { display: grid; flex: 1; grid-template: 15px minmax(0, 1fr) / 15px minmax(0, 1fr); min-height: 0; }
  .corner { background: #e8e8e8; }
  .track { overflow: hidden; }
  .ruler { display: block; width: 100%; height: 100%; }
  .ruler text { font-size: 11px; text-anchor: middle; }
  .canvas { padding: 11px; overflow: hidden; }
  .page { display: block; box-shadow: 1px 1px 5px 2px #999; font-family: "Liberation Sans", Arial, sans-serif; font-size: 12px; }
  .ghost { fill: #ccc; font-size: 14px; text-anchor: middle; }
  .report-title { font: bold 50px "Liberation Serif", "Times New Roman", serif; font-kerning: none; text-anchor: middle; }
  .col { fill: #736343; font-weight: bold; text-anchor: middle; }
  .field { stroke: #000; stroke-width: .3px; text-anchor: middle; }
  .date { fill: #736343; stroke: #736343; stroke-width: .2px; font-size: 10px; }
  .sum { stroke: #000; stroke-width: .3px; font-size: 10px; text-anchor: middle; }

  .bottom-tabs { display: flex; flex: none; height: 20px; border-top: 1px solid #999; background: #e3e3e3; }
  .bottom-tabs button { padding: 0 4px; border-right: 1px solid #999; }
  .bottom-tabs .on { background: #f0f0f0; }
  .bottom-tabs span { margin-left: auto; padding-right: 4px; line-height: 16px; }

  .palette .group { padding-top: 1px; border-top: 1px solid #999; }
  .palette h2 {
    display: flex;
    align-items: center;
    gap: 3px;
    height: 19px;
    margin: 0;
    padding: 0 1px 0 2px;
    border-top: 1px solid #ddd;
    background: #f1f1f1;
    font: inherit;
  }
  .palette h2 .tool { margin-left: auto; }
  .palette ul { margin: 0; padding: 2px 0 3px 16px; list-style: none; }
  .palette li button { gap: 3px; height: 23px; }

  .status { display: flex; flex: none; align-items: center; height: 26px; padding-left: 85.2%; }
  .taskbar { display: flex; flex: none; height: 40px; background: #101010; color: #fff; }
  .start { justify-content: center; width: 48px; margin-right: 7px; }
  .task { justify-content: center; width: 40px; margin-right: 5px; border-bottom: 2px solid #9be3fb; }
  .task .icon { width: 24px; height: 24px; }
  .current { width: 48px; background: #333; }
  .tray { display: flex; align-items: center; margin-left: auto; padding-right: 4px; }
  .weather { gap: 10px; margin-right: 18px; font-size: 13px; color: #ddd; }
  .sun { width: 19px; height: 19px; border-radius: 50%; background: linear-gradient(135deg, #ffe070 20%, #ff9c0c); }
  .tray svg { display: block; width: 12px; height: 12px; fill: none; stroke: #fff; stroke-width: 1.3; }
  .clock { display: flex; flex-direction: column; align-items: center; margin: 0 17px 0 12px; }
  .notify { height: 40px; padding-right: 20px; border-right: 1px solid #555; }
  .tray .notify svg { width: 17px; height: 17px; }
</style>
